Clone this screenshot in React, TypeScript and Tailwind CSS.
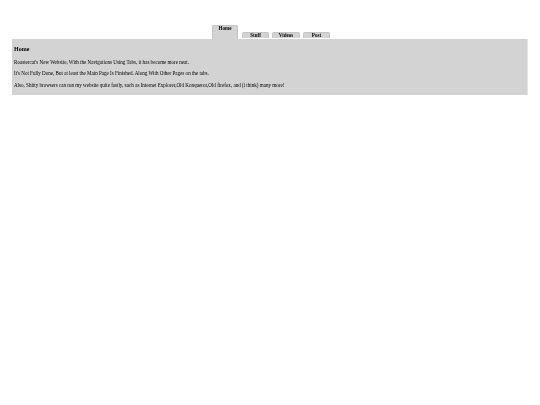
const tabs = [
  { label: 'Stuff', width: 'w-[27px]' },
  { label: 'Videos', width: 'w-[28px]' },
  { label: 'Post', width: 'w-[27px]' },
];

export default function App() {
  return (
    <div className="min-h-[405px] bg-white px-3 pt-[25px] font-['Liberation_Serif',serif] text-black blur-[0.35px]">
      <div className="flex items-end pl-[200px]">
        <div className="mr-[4px] flex h-[14px] w-[26px] justify-center rounded-t-[2px] border border-b-0 border-[#c4c4c4] bg-[#d3d3d3] text-[5.07px] font-bold leading-[5px]">
          Home
        </div>
        {tabs.map((tab) => (
          <div
            key={tab.label}
            className={`${tab.width} mr-[3px] mb-[1px] flex h-[6.5px] items-center justify-center rounded-t-[2px] border border-b-0 border-[#c4c4c4] bg-[#d3d3d3] text-[5.07px] font-bold leading-[5px]`}
          >
            {tab.label}
          </div>
        ))}
      </div>
      <div className="h-[56px] border-r border-[#e4e4e4] bg-[#d3d3d3] px-[2px] pt-[6px]">
        <h1 className="text-[6px] font-bold leading-[9px]">Home</h1>
        <p className="mt-[4.5px] text-[5.07px] leading-[6px]">
          Roastercat's New Website, With the Navigations Using Tabs, it has become more neat.
        </p>
        <p className="mt-[5.5px] text-[5.07px] leading-[6px]">
          It's Not Fully Done, But at least the Main Page Is Finished. Along With Other Pages on the tabs.
        </p>
        <p className="mt-[5.5px] text-[5.07px] leading-[6px]">
          Also, Shitty browsers can run my website quite fastly, such as Internet Explorer,Old Konqueror,Old firefox, and (i think) many more!
        </p>
      </div>
    </div>
  );
}
